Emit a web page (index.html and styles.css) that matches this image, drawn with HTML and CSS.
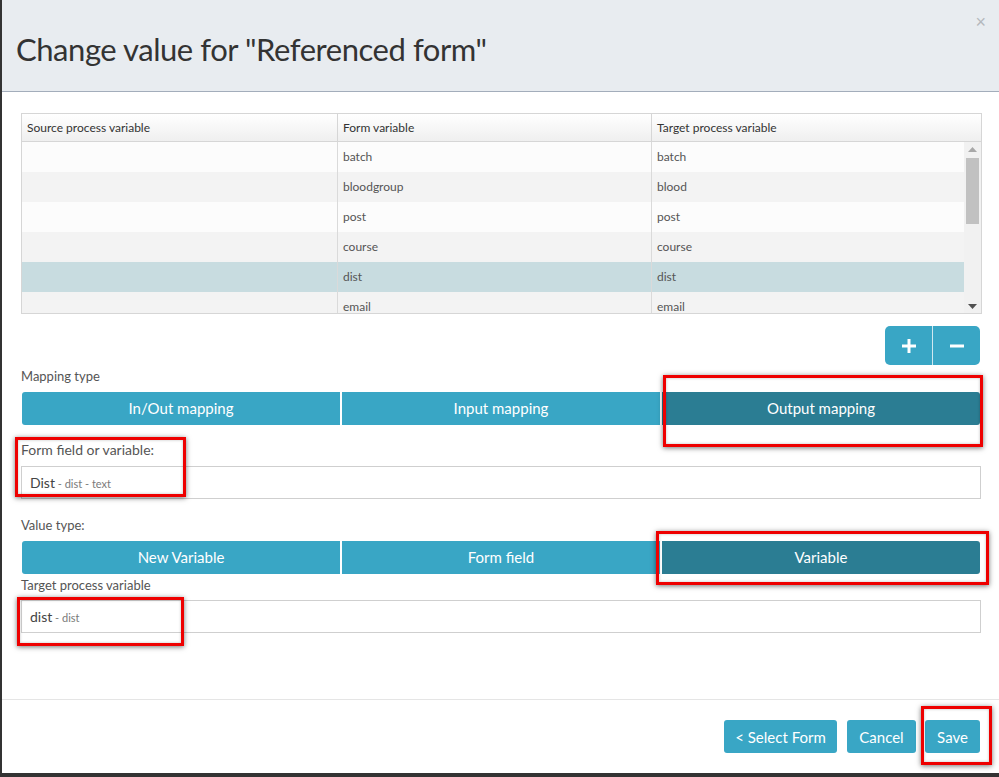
FILE: index.html
```html
<!DOCTYPE html>
<html lang="en">
<head>
<meta charset="utf-8">
<title>Change value for "Referenced form"</title>
<link rel="stylesheet" href="styles.css">
</head>
<body>
<div class="modal">
  <header class="modal-header">
    <h1 class="modal-title">Change value for "Referenced form"</h1>
    <button class="close" type="button" aria-label="Close">×</button>
  </header>
  <main class="modal-body">
    <div class="grid">
      <div class="grid-head">
        <div class="hcell">Source process variable</div>
        <div class="hcell">Form variable</div>
        <div class="hcell">Target process variable</div>
      </div>
      <div class="grid-body">
        <div class="rows">
          <div class="row odd"><div class="cell"></div><div class="cell">batch</div><div class="cell">batch</div></div>
          <div class="row even"><div class="cell"></div><div class="cell">bloodgroup</div><div class="cell">blood</div></div>
          <div class="row odd"><div class="cell"></div><div class="cell">post</div><div class="cell">post</div></div>
          <div class="row even"><div class="cell"></div><div class="cell">course</div><div class="cell">course</div></div>
          <div class="row selected"><div class="cell"></div><div class="cell">dist</div><div class="cell">dist</div></div>
          <div class="row even"><div class="cell"></div><div class="cell">email</div><div class="cell">email</div></div>
        </div>
        <div class="scrollbar">
          <svg class="arrow" width="9" height="5" viewBox="0 0 9 5"><path d="M0 5 L4.5 0 L9 5 Z" fill="#a8a8a8"/></svg>
          <div class="thumb"></div>
          <div class="track"></div>
          <svg class="arrow" width="9" height="5" viewBox="0 0 9 5"><path d="M0 0 L4.5 5 L9 0 Z" fill="#505050"/></svg>
        </div>
      </div>
    </div>

    <div class="row-actions">
      <div class="btn-group">
        <button class="icon-btn" type="button" aria-label="Add">
          <svg width="14" height="14" viewBox="0 0 14 14"><path d="M5.5 0h3v5.5H14v3H8.5V14h-3V8.5H0v-3h5.5z" fill="#fff"/></svg>
        </button>
        <button class="icon-btn" type="button" aria-label="Remove">
          <svg width="14" height="14" viewBox="0 0 14 14"><path d="M0 5.5h14v3H0z" fill="#fff"/></svg>
        </button>
      </div>
    </div>

    <label class="label label-mapping">Mapping type</label>
    <div class="segmented">
      <button class="seg" type="button">In/Out mapping</button>
      <button class="seg" type="button">Input mapping</button>
      <button class="seg active" type="button">Output mapping</button>
    </div>

    <label class="label label-field">Form field or variable:</label>
    <div class="input">Dist<span class="sub"> - dist - text</span></div>

    <label class="label label-value">Value type:</label>
    <div class="segmented">
      <button class="seg" type="button">New Variable</button>
      <button class="seg" type="button">Form field</button>
      <button class="seg active" type="button">Variable</button>
    </div>

    <label class="label label-target">Target process variable</label>
    <div class="input">dist<span class="sub"> - dist</span></div>
  </main>
  <footer class="modal-footer">
    <button class="btn btn-back" type="button">&lt; Select Form</button>
    <button class="btn btn-cancel" type="button">Cancel</button>
    <button class="btn btn-save" type="button">Save</button>
  </footer>
</div>

<div class="annotations" aria-hidden="true">
  <div class="mark mark-output"></div>
  <div class="mark mark-field"></div>
  <div class="mark mark-variable"></div>
  <div class="mark mark-target"></div>
  <div class="mark mark-save"></div>
</div>
</body>
</html>
```

FILE: styles.css
```css
* { box-sizing: border-box; }

html, body {
  margin: 0;
  padding: 0;
}

body {
  width: 999px;
  height: 777px;
  overflow: hidden;
  background: #333333;
  font-family: Lato, "Open Sans", "Liberation Sans", sans-serif;
  color: #333;
  position: relative;
}

.modal {
  margin-left: 2px;
  width: 997px;
  height: 773px;
  background: #fff;
  display: flex;
  flex-direction: column;
}

.modal-header {
  height: 92px;
  flex: none;
  background: #e8ecf0;
  border-bottom: 1px solid #a3adbb;
  display: flex;
  align-items: flex-start;
  justify-content: space-between;
}

.modal-title {
  margin: 0;
  padding: 29px 0 0 14px;
  font-weight: 400;
  font-size: 31px;
  line-height: 40px;
  color: #333;
  letter-spacing: -0.45px;
}

.close {
  margin: 12px 13px 0 0;
  padding: 0;
  border: 0;
  background: none;
  color: #b4b8bd;
  font-family: "Liberation Sans", sans-serif;
  font-size: 18px;
  line-height: 20px;
}

.modal-body {
  flex: 1;
  padding: 21px 18px 0 19px;
  display: flex;
  flex-direction: column;
}

/* grid */
.grid {
  border: 1px solid #d6d6d6;
  width: 961px;
  height: 201px;
  display: flex;
  flex-direction: column;
}

.grid-head {
  height: 28px;
  flex: none;
  display: grid;
  grid-template-columns: 315px 314px 1fr;
  background: linear-gradient(#ffffff, #efefef);
  border-bottom: 1px solid #d6d6d6;
}

.hcell {
  font-size: 12px;
  line-height: 27px;
  padding-left: 5px;
  color: #333;
  border-left: 1px solid #d6d6d6;
}
.hcell:first-child { border-left: 0; }

.grid-body {
  flex: 1;
  display: flex;
  overflow: hidden;
}

.rows {
  flex: 1;
  overflow: hidden;
}

.row {
  height: 30px;
  display: grid;
  grid-template-columns: 315px 314px 1fr;
}
.row.odd { background: #fcfcfc; }
.row.even { background: #f3f3f3; }
.row.selected { background: #c8dce0; }

.cell {
  font-size: 12px;
  line-height: 30px;
  padding-left: 5px;
  color: #555;
  border-left: 1px solid #dadada;
}
.cell:first-child { border-left: 0; }

.scrollbar {
  width: 17px;
  flex: none;
  background: #f1f1f1;
  display: flex;
  flex-direction: column;
  align-items: center;
  padding: 5px 0 4px;
}
.scrollbar .arrow { flex: none; }
.thumb {
  width: 13px;
  height: 66px;
  margin-top: 6px;
  background: #c1c1c1;
  flex: none;
}
.track { flex: 1; }

/* +/- */
.row-actions {
  display: flex;
  justify-content: flex-end;
  margin-top: 12px;
  padding-right: 1px;
}
.btn-group {
  display: flex;
  border-radius: 5px;
  overflow: hidden;
}
.icon-btn {
  width: 47px;
  height: 39px;
  border: 0;
  padding: 0;
  background: #39a6c5;
  display: flex;
  align-items: center;
  justify-content: center;
}
.icon-btn + .icon-btn {
  border-left: 1px solid #cfe8f0;
  width: 48px;
}

/* labels */
.label {
  display: block;
  font-size: 13px;
  line-height: 18px;
  color: #555;
}
.label-mapping { margin-top: 2px; margin-bottom: 7px; }
.label-field { margin-top: 16px; margin-bottom: 7px; font-size: 14px; }
.label-value { margin-top: 17px; margin-bottom: 7px; }
.label-target { margin-top: 2px; margin-bottom: 6px; }

/* segmented */
.segmented {
  display: grid;
  grid-template-columns: 1fr 1fr 1fr;
  gap: 2px;
  margin-left: 1px;
  height: 33px;
  width: 958px;
}
.seg {
  border: 0;
  padding: 0;
  background: #39a6c5;
  color: #fff;
  font-family: inherit;
  font-size: 15px;
  line-height: 33px;
}
.seg:first-child { border-radius: 3px 0 0 3px; }
.seg:last-child { border-radius: 0 3px 3px 0; }
.seg.active { background: #2b7d93; }

/* inputs */
.input {
  width: 960px;
  height: 33px;
  border: 1px solid #cfcfcf;
  padding-left: 8px;
  font-size: 14px;
  line-height: 31px;
  color: #444;
}
.input .sub {
  font-size: 11px;
  color: #7a7a7a;
}

/* footer */
.modal-footer {
  flex: none;
  border-top: 1px solid #e5e5e5;
  padding: 20px 19px 20px 0;
  display: flex;
  justify-content: flex-end;
  gap: 10px;
}
.btn {
  height: 33px;
  border: 0;
  border-radius: 3px;
  background: #39a6c5;
  color: #fff;
  font-family: inherit;
  font-size: 15px;
  padding: 0 12px;
}
.btn-back { width: 113px; padding: 0; }
.btn-cancel { width: 69px; padding: 0; }
.btn-save { width: 55px; padding: 0; margin-left: -1px; }

/* red annotation boxes drawn over the screenshot */
.annotations {
  position: absolute;
  inset: 0;
  pointer-events: none;
}
.mark {
  position: absolute;
  border: 3px solid #ee0000;
  box-shadow: 0 1px 5px rgba(0, 0, 0, 0.55), inset 0 0 3px rgba(0, 0, 0, 0.25);
}
.mark-output   { left: 663px; top: 375px; width: 320px; height: 72px; }
.mark-field    { left: 15px;  top: 437px; width: 171px; height: 60px; }
.mark-variable { left: 656px; top: 531px; width: 333px; height: 54px; }
.mark-target   { left: 17px;  top: 597px; width: 167px; height: 49px; }
.mark-save     { left: 921px; top: 706px; width: 71px;  height: 59px; }
```
